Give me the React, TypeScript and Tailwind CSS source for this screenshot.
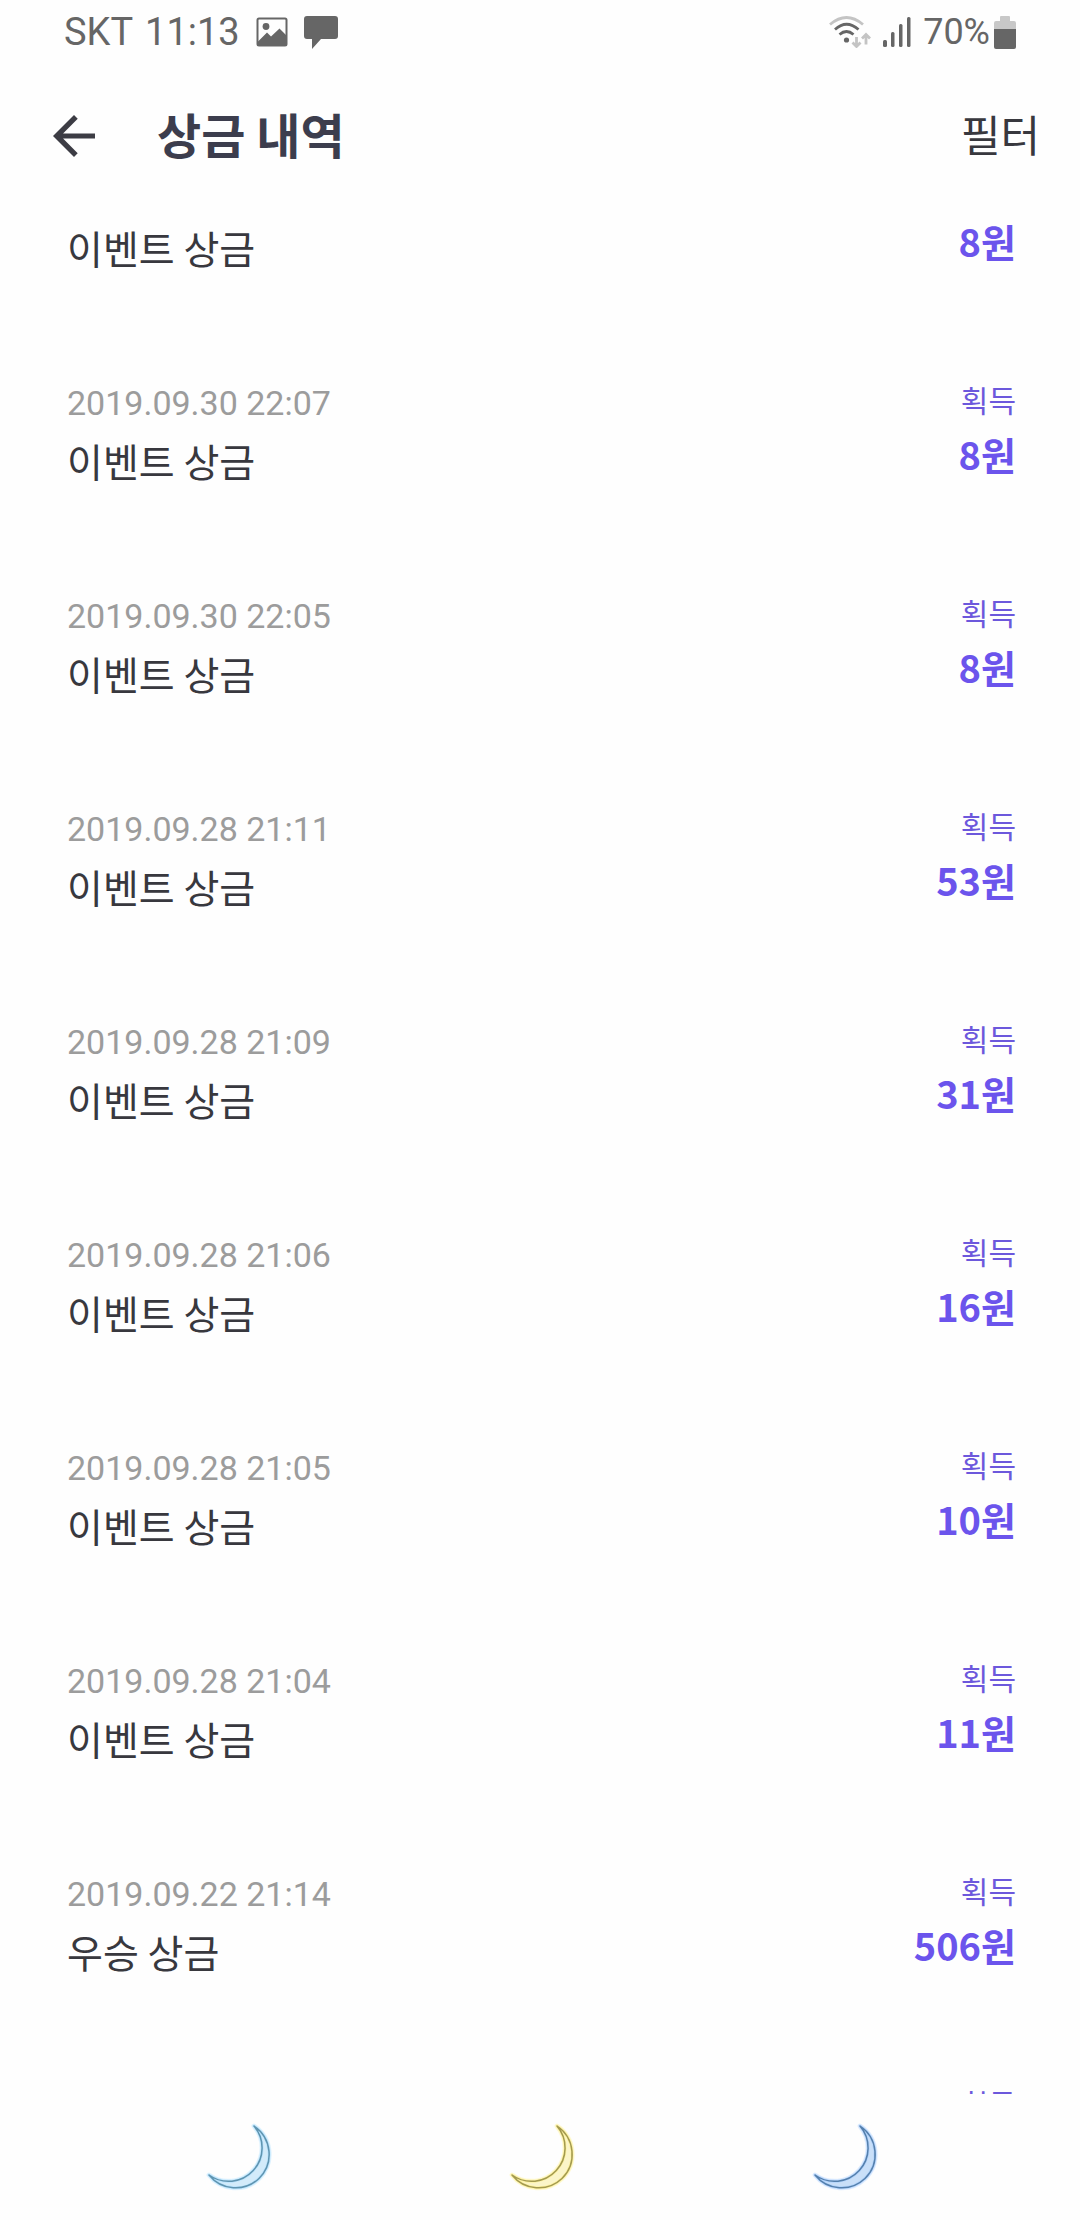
type Entry = {
  date?: string;
  status?: string;
  title: string;
  amount: string;
};

const entries: Entry[] = [
  { title: "이벤트 상금", amount: "8원" },
  { date: "2019.09.30 22:07", status: "획득", title: "이벤트 상금", amount: "8원" },
  { date: "2019.09.30 22:05", status: "획득", title: "이벤트 상금", amount: "8원" },
  { date: "2019.09.28 21:11", status: "획득", title: "이벤트 상금", amount: "53원" },
  { date: "2019.09.28 21:09", status: "획득", title: "이벤트 상금", amount: "31원" },
  { date: "2019.09.28 21:06", status: "획득", title: "이벤트 상금", amount: "16원" },
  { date: "2019.09.28 21:05", status: "획득", title: "이벤트 상금", amount: "10원" },
  { date: "2019.09.28 21:04", status: "획득", title: "이벤트 상금", amount: "11원" },
  { date: "2019.09.22 21:14", status: "획득", title: "우승 상금", amount: "506원" },
  { status: "획득", title: "", amount: "" },
];

const moons = [
  { label: "최근 앱", fill: "#d3ebfa", stroke: "#5f94b0", glow: "#9fdcff" },
  { label: "홈", fill: "#fbf5c9", stroke: "#a39a50", glow: "#fff07a" },
  { label: "뒤로", fill: "#c9dff8", stroke: "#5580ad", glow: "#9cc8ff" },
];

function PictureIcon() {
  return (
    <svg width="32" height="30" viewBox="0 0 32 30" aria-hidden="true">
      <rect x="1.5" y="1.5" width="29" height="27" rx="1.5" fill="none" stroke="#666" strokeWidth="2" />
      <circle cx="10" cy="9.5" r="3.4" fill="#666" />
      <path d="M2 24.5L11 15.5L15 19.5L23.5 11.5L30 18V28H2Z" fill="#666" />
    </svg>
  );
}

function BubbleIcon() {
  return (
    <svg width="34" height="33" viewBox="0 0 34 33" aria-hidden="true">
      <path d="M3 0H31Q34 0 34 3V20Q34 23 31 23H17L8 33V23H3Q0 23 0 20V3Q0 0 3 0Z" fill="#666" />
    </svg>
  );
}

function WifiIcon() {
  return (
    <svg width="42" height="32" viewBox="0 0 42 32" fill="none" aria-hidden="true">
      <path d="M1 8.5Q17.5 -5.5 34 8.5" stroke="#c4c4c4" strokeWidth="2.8" />
      <path d="M6 13.5Q17.5 3 29.5 13.5" stroke="#666" strokeWidth="2.8" />
      <path d="M10.5 18.500Q17.5 12.5 24.5 18.5" stroke="#666" strokeWidth="2.8" />
      <circle cx="17.500" cy="24" r="2.6" fill="#666" />
      <path d="M27.5 21V30M23.5 26.5L27.5 30.5L31.5 26.5" stroke="#c4c4c4" strokeWidth="2.8" />
      <path d="M37 28.5V19M33 22.5L37 18.5L41 22.5" stroke="#c4c4c4" strokeWidth="2.8" />
    </svg>
  );
}

function SignalIcon() {
  return (
    <svg width="28" height="30" viewBox="0 0 28 30" fill="#666" aria-hidden="true">
      <rect x="0" y="23" width="4" height="7" rx="1.5" />
      <rect x="8" y="15" width="3.5" height="15" rx="1.5" />
      <rect x="16" y="7" width="3.5" height="23" rx="1.5" />
      <rect x="24" y="0" width="3.5" height="30" rx="1.5" />
    </svg>
  );
}

function BatteryIcon() {
  return (
    <svg width="22" height="33" viewBox="0 0 22 33" aria-hidden="true">
      <path d="M6 1Q6 0 7 0H15Q16 0 16 1V5H20Q22 5 22 7V13H0V7Q0 5 2 5H6Z" fill="#c8c8c8" />
      <path d="M0 13H22V31Q22 33 20 33H2Q0 33 0 31Z" fill="#666" />
    </svg>
  );
}

function MoonIcon({ fill, stroke, glow }: { fill: string; stroke: string; glow: string }) {
  const shape = "M54 11A34 34 0 0 1 59 63.500A34 34 0 0 1 9 60A33.5 33.5 0 0 0 54 11Z";
  return (
    <svg width="80" height="80" viewBox="0 0 80 80" strokeLinejoin="round" aria-hidden="true">
      <path d={shape} fill="none" stroke={glow} strokeWidth="5" opacity="0.3" />
      <path d={shape} fill={fill} stroke={glow} strokeWidth="3" strokeOpacity="0.5" />
      <path d={shape} fill="none" stroke={stroke} strokeWidth="1.5" />
    </svg>
  );
}

export default function App() {
  return (
    <div className="flex h-screen flex-col overflow-hidden bg-[#fefefe] font-['Noto_Sans_CJK_KR',sans-serif]">
      <div className="flex h-16 shrink-0 items-center justify-between px-16 text-[38px] leading-none text-[#666]">
        <div className="flex items-center font-['Roboto',sans-serif]">
          <span>SKT</span>
          <span className="ml-3">11:13</span>
          <span className="ml-4"><PictureIcon /></span>
          <span className="ml-4"><BubbleIcon /></span>
        </div>
        <div className="flex items-center">
          <WifiIcon />
          <span className="ml-3"><SignalIcon /></span>
          <span className="ml-3 font-['Roboto',sans-serif] text-[36px]">70%</span>
          <span className="ml-1"><BatteryIcon /></span>
        </div>
      </div>

      <header className="flex shrink-0 items-center pt-[45px] pr-10 pl-[53px] leading-[48px]">
        <button type="button" aria-label="뒤로 가기">
          <svg width="42" height="42" viewBox="4 4 16 16" fill="#3c3c44" aria-hidden="true">
            <path d="M20 11.05H7.83l5.59-5.64L12 4l-8 8 8 8 1.41-1.41L7.83 12.95H20z" />
          </svg>
        </button>
        <h1 className="ml-[62px] flex-1 pb-[6px] text-[48px] font-bold text-[#3c3d4d]">상금 내역</h1>
        <button type="button" className="pb-[6px] text-[43px] text-[#38383e]">필터</button>
      </header>

      <main className="min-h-0 flex-1 overflow-hidden">
        <ul>
          {entries.map((entry, i) => (
            <li key={i} className="flex h-[213px] items-start justify-between pr-16 pl-[67px]">
              <div>
                <p className="h-[54px] font-['Roboto',sans-serif] text-[34px] leading-[54px] text-[#9c9c9c]">{entry.date}</p>
                <p className="text-[39px] leading-[60px] text-[#38383e]">{entry.title}</p>
              </div>
              <div className="text-right">
                <p className="h-[50px] text-[30px] leading-[46px] text-[#6c58dc]">{entry.status}</p>
                <p className="text-[38px] leading-[56px] font-bold text-[#6b54ec]">{entry.amount}</p>
              </div>
            </li>
          ))}
        </ul>
      </main>

      <nav className="grid h-[126px] shrink-0 grid-cols-3 items-center pr-[82px] pb-1 pl-[88px]">
        {moons.map((moon) => (
          <button key={moon.label} type="button" aria-label={moon.label} className="flex justify-center">
            <MoonIcon fill={moon.fill} stroke={moon.stroke} glow={moon.glow} />
          </button>
        ))}
      </nav>
    </div>
  );
}
